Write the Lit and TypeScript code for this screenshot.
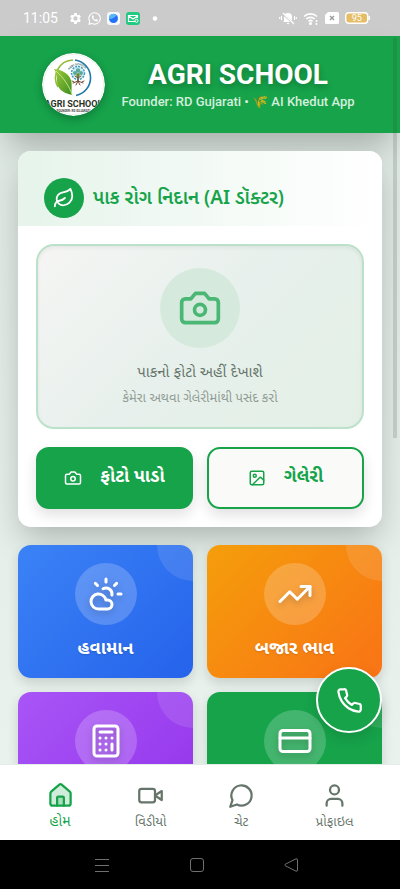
import { LitElement, html, css, svg } from "lit";
import { customElement } from "lit/decorators.js";

const cameraShape = svg`<path d="M14.5 4h-5L7 7H4a2 2 0 0 0-2 2v9a2 2 0 0 0 2 2h16a2 2 0 0 0 2-2V9a2 2 0 0 0-2-2h-3l-2.500-3z"/><circle cx="12" cy="13" r="3"/>`;

const shapes = {
  camera: cameraShape,
  leaf: svg`<path d="M11 20A7 7 0 0 1 9.800 6.100C15.500 5 17 4.480 19 2c1 2 2 4.180 2 8 0 5.500-4.780 10-10 10Z"/><path d="M2 21c0-3 1.850-5.360 5.080-6C9.500 14.520 12 13 13 12"/>`,
  image: svg`<rect x="3" y="3" width="18" height="18" rx="2"/><circle cx="9" cy="9" r="2"/><path d="m21 15-3.086-3.086a2 2 0 0 0-2.828 0L6 21"/>`,
  weather: svg`<path d="M12 2v2M4.930 4.930l1.410 1.410M20 12h2M19.070 4.930l-1.410 1.410M15.947 12.650a4 4 0 0 0-5.925-4.128"/><path d="M13 22H7a5 5 0 1 1 4.900-6H13a3 3 0 0 1 0 6Z"/>`,
  trend: svg`<path d="M22 7 13.500 15.500 8.500 10.500 2 17"/><path d="M16 7h6v6"/>`,
  calculator: svg`<rect x="4" y="2" width="16" height="20" rx="2"/><path d="M8 6h8M16 14v4M16 10h.01M12 10h.01M8 10h.01M12 14h.01M8 14h.01M12 18h.01M8 18h.01"/>`,
  card: svg`<rect x="2" y="5" width="20" height="14" rx="2"/><path d="M2 10h20"/>`,
  phone: svg`<path d="M22 16.920v3a2 2 0 0 1-2.180 2 19.790 19.790 0 0 1-8.630-3.070 19.500 19.500 0 0 1-6-6 19.790 19.790 0 0 1-3.070-8.670A2 2 0 0 1 4.110 2h3a2 2 0 0 1 2 1.720 12.840 12.840 0 0 0 .7 2.810 2 2 0 0 1-.45 2.110L8.090 9.910a16 16 0 0 0 6 6l1.270-1.270a2 2 0 0 1 2.110-.45 12.840 12.840 0 0 0 2.810.7A2 2 0 0 1 22 16.920z"/>`,
  home: svg`<path fill="#16a34a" fill-opacity=".2" d="M3 10a2 2 0 0 1 .709-1.528l7-5.999a2 2 0 0 1 2.582 0l7 5.999A2 2 0 0 1 21 10v9a2 2 0 0 1-2 2H5a2 2 0 0 1-2-2z"/><path fill="#16a34a" fill-opacity=".2" d="M15 21v-7a1 1 0 0 0-1-1h-4a1 1 0 0 0-1 1v7"/>`,
  video: svg`<path d="m22 8-6 4 6 4V8Z"/><rect x="2" y="6" width="14" height="12" rx="2"/>`,
  chat: svg`<path d="M7.900 20A9 9 0 1 0 4 16.100L2 22Z"/>`,
  user: svg`<circle cx="12" cy="7" r="4"/><path d="M19 21v-2a4 4 0 0 0-4-4H9a4 4 0 0 0-4 4v2"/>`,
};

const icon = (name: keyof typeof shapes, cls = "") =>
  html`<svg class="icon ${cls}" viewBox="0 0 24 24" aria-hidden="true">${shapes[name]}</svg>`;

const tiles = [
  { label: "હવામાન", name: "Weather", icon: "weather", tone: "blue" },
  { label: "બજાર ભાવ", name: "Market prices", icon: "trend", tone: "orange" },
  { label: "", name: "Calculator", icon: "calculator", tone: "purple" },
  { label: "", name: "Card", icon: "card", tone: "green" },
] as const;

const tabs = [
  { label: "હોમ", icon: "home", active: true },
  { label: "વિડીયો", icon: "video", active: false },
  { label: "ચેટ", icon: "chat", active: false },
  { label: "પ્રોફાઇલ", icon: "user", active: false },
] as const;

@customElement("app-root")
export class AppRoot extends LitElement {
  static styles = css`
    :host {
      --green: #16a34a;
      --gujarati: "Noto Sans Gujarati", "Noto Sans", sans-serif;
      display: flex;
      flex-direction: column;
      height: 100vh;
      overflow: hidden;
      position: relative;
      background: #e5efe9;
      font-family: Roboto, "Noto Sans Gujarati", "Noto Sans", sans-serif;
    }
    * { box-sizing: border-box; }
    svg { display: block; flex: none; }
    button { font: inherit; border: 0; margin: 0; padding: 0; cursor: pointer; }
    .icon { width: 24px; height: 24px; fill: none; stroke: currentColor; stroke-width: 2; stroke-linecap: round; stroke-linejoin: round; }

    .status { flex: none; height: 36px; padding: 0 30px 0 23px; display: flex; align-items: center; justify-content: space-between; background: #cbcbcb; color: #fff; font-size: 14px; }
    .group { display: flex; align-items: center; gap: 6px; }
    .clock { margin-right: 5px; }

    .header { flex: none; display: flex; align-items: center; justify-content: center; gap: 13px; padding: 17px 18px; background: var(--green); color: #fff; box-shadow: 0 18px 32px -8px rgba(0, 0, 0, .28); z-index: 1; }
    .logo { width: 63px; height: 63px; border-radius: 50%; box-shadow: 0 3px 8px rgba(0, 0, 0, .25); }
    .brand { text-align: center; min-width: 240px; }
    .title { margin: 0; font-size: 28px; line-height: 34px; font-weight: 700; text-shadow: 0 3px 6px rgba(0, 0, 0, .25); }
    .subtitle { margin: 0; font-size: 13px; line-height: 20px; font-weight: 500; color: #d4eedd; }

    .content { flex: 1; min-height: 0; overflow: hidden; padding: 18px; display: flex; flex-direction: column; gap: 18px; background: linear-gradient(#dfe9e3, #e9f2ed); }
    .doctor { flex: none; position: relative; z-index: 2; background: #fff; border-radius: 13px; box-shadow: 0 14px 32px -4px rgba(0, 0, 0, .25); }
    .doctor-head { display: flex; align-items: center; gap: 9px; padding: 27px 26px 8px; border-radius: 13px 13px 0 0; background: linear-gradient(90deg, #e6f4eb, #fff); color: var(--green); }
    .badge { display: grid; place-items: center; width: 40px; height: 40px; border-radius: 50%; background: var(--green); color: #fff; }
    .doctor-title { margin: 0; padding-top: 4px; font: 600 19px/30px "Noto Sans Gujarati", "Noto Sans", sans-serif; }
    .s18 { width: 18px; height: 18px; }
    .s22 { width: 22px; height: 22px; }
    .s27 { width: 27px; height: 27px; }
    .s36 { width: 36px; height: 36px; filter: drop-shadow(0 3px 3px rgba(0, 0, 0, .2)); }
    .s44 { width: 44px; height: 44px; color: #4bb774; }
    .doctor-body { padding: 18px; display: flex; flex-direction: column; gap: 18px; }
    .preview { display: flex; flex-direction: column; align-items: center; border: 2px solid #bce1ca; border-radius: 18px; padding: 22px 16px 16px; background: linear-gradient(135deg, #f5f5f4, #e7f0ec 50%, #e4f0e6); box-shadow: inset 0 2px 4px rgba(0, 0, 0, .06); font-family: var(--gujarati); text-align: center; }
    .disc { display: grid; place-items: center; width: 80px; height: 80px; border-radius: 50%; background: #d5e9dd; margin-bottom: 13px; }
    .hint { margin: 0; font-size: 15px; line-height: 26px; color: #66756a; }
    .subhint { margin: 0; font-size: 13px; line-height: 24px; color: #909c94; }
    .actions { display: grid; grid-template-columns: 1fr 1fr; gap: 14px; }
    .action { height: 62px; display: flex; align-items: center; justify-content: center; gap: 18px; border-radius: 13px; border: 2px solid var(--green); font: 700 18px/24px "Noto Sans Gujarati", "Noto Sans", sans-serif; box-shadow: 0 6px 14px rgba(0, 0, 0, .12); }
    .primary { background: var(--green); color: #fff; }
    .secondary { background: #fafbf9; color: var(--green); }

    .tiles { flex: none; display: grid; grid-template-columns: 1fr 1fr; gap: 14px; }
    .tile-wrap { display: grid; border-radius: 13px; box-shadow: 0 5px 12px rgba(0, 0, 0, .14); position: relative; z-index: 2; }
    .tile { position: relative; overflow: hidden; height: 133px; padding: 18px 8px 14px; display: flex; flex-direction: column; align-items: center; justify-content: space-between; border-radius: 13px; color: #fff; font: 700 18px/28px "Noto Sans Gujarati", "Noto Sans", sans-serif; text-shadow: 0 1px 2px rgba(0, 0, 0, .15); }
    .tile::after { content: ""; position: absolute; top: -36px; right: -36px; width: 72px; height: 72px; border-radius: 50%; background: rgba(255, 255, 255, .11); }
    .blue { background: linear-gradient(135deg, #3b82f6, #2563eb); }
    .orange { background: linear-gradient(135deg, #f59e0b, #f97316); }
    .purple { background: linear-gradient(135deg, #a855f7, #9333ea); }
    .green { background: var(--green); }
    .tile-disc { display: grid; place-items: center; width: 62px; height: 62px; border-radius: 50%; background: rgba(255, 255, 255, .2); }

    .tabs { flex: none; z-index: 3; height: 76px; padding: 0 16px; display: flex; justify-content: space-around; align-items: center; background: #fff; border-top: 1px solid #e3ece6; }
    .tab { display: flex; flex-direction: column; align-items: center; gap: 2px; padding-top: 12px; color: #66756a; text-decoration: none; font: 400 13px/24px "Noto Sans Gujarati", "Noto Sans", sans-serif; }
    .active { color: var(--green); font-size: 14px; }

    .system { flex: none; z-index: 3; height: 49px; padding-right: 8px; display: flex; justify-content: center; gap: 80px; align-items: center; background: #000; color: #707070; }
    .system button { background: none; color: inherit; }
    .system svg { fill: none; stroke: currentColor; stroke-width: 1; stroke-linejoin: round; }
    .call { position: absolute; right: 18px; bottom: 156px; width: 66px; height: 66px; display: grid; place-items: center; z-index: 4; border-radius: 50%; border: 2px solid #fff; background: var(--green); color: #fff; box-shadow: 0 5px 14px rgba(0, 0, 0, .12); }
    .call .icon { width: 27px; height: 27px; }
    .scrollbar { position: absolute; top: 38px; right: 3px; width: 4px; height: 45%; background: rgba(60, 75, 65, .18); z-index: 5; }
  `;

  private logo() {
    return html`<svg class="logo" viewBox="0 0 63 63" role="img" aria-label="Agri School">
      <defs>
        <clipPath id="round"><circle cx="31.500" cy="31.500" r="31.500" /></clipPath>
        <linearGradient id="leaf" x1="0" y1="0" x2="1" y2="1"><stop offset="0" stop-color="#a2cc39" /><stop offset="1" stop-color="#3c8d20" /></linearGradient>
      </defs>
      <g clip-path="url(#round)">
        <rect width="63" height="63" fill="#fff" />
        <circle cx="31.500" cy="31.500" r="30" fill="none" stroke="#edf1ee" />
        <path d="M31 7A18 18 0 0 0 16 34" fill="none" stroke="#94bb3a" stroke-width="1.600" />
        <path d="M33 7A18 18 0 0 1 34 42.500" fill="none" stroke="#2478a8" stroke-width="1.600" />
        <path id="arc" d="M27 17Q36 7 46 18" fill="none" />
        <text font-family="Roboto" font-size="3" font-weight="700" fill="#3c6d73"><textPath href="#arc">AGRI SCHOOL</textPath></text>
        <circle cx="36" cy="20" r="6.500" fill="#d7eff4" stroke="#3d9dbb" stroke-width="1.500" stroke-dasharray="2 1" />
        <g fill="#5aa7a0"><circle cx="33" cy="20" r="2" /><circle cx="36" cy="17.500" r="2.200" /><circle cx="39" cy="20" r="2" /><circle cx="36" cy="22" r="2" fill="#79b64a" /></g>
        <path d="M36 21v7M36 25l-3-2M36 25l3-2M36 28l-5 2M36 28l-2 4M36 28l2 4M36 28l5 2M32 29l-2-1M40 29l2-1" fill="none" stroke="#70482f" stroke-width="1" stroke-linecap="round" />
        <path d="M12 16C21 17 28 21 29.500 29C30 35 29 39 30 42C20 40 15 35 15 28C15 22 14 19 12 16Z" fill="url(#leaf)" />
        <path d="M14 18C22 25 27 33 30.500 42.500" fill="none" stroke="#dcedaa" stroke-width=".8" />
        <text x="31.500" y="53.500" text-anchor="middle" font-family="Roboto" font-size="9" font-weight="700" fill="#29331f">AGRI SCHOOL</text>
        <text x="31.500" y="58.500" text-anchor="middle" font-family="Roboto" font-size="3" font-weight="700" fill="#444">FOUNDER: RD GUJARATI</text>
      </g>
    </svg>`;
  }

  private statusBar() {
    return html`<div class="status">
      <div class="group">
        <span class="clock">11:05</span>
        <svg width="13" height="13" viewBox="0 0 24 24" fill="#fff"><path fill-rule="evenodd" d="m19.400 13 .1-1-.1-1 2.500-2-2.400-4.100-3 1.200-1.700-1L14.400 2h-4.800l-.4 3.100-1.700 1-3-1.200L2.100 9l2.500 2-.1 1 .1 1-2.500 2 2.400 4.100 3-1.200 1.700 1 .4 3.100h4.800l.4-3.100 1.700-1 3 1.200 2.400-4.100zM12 16a4 4 0 1 1 0-8 4 4 0 0 1 0 8z" /></svg>
        <svg width="13" height="13" viewBox="0 0 24 24" fill="none" stroke="#fff" stroke-width="2"><path d="M3 17a10.500 10.500 0 1 1 4 4l-5 1.500z" /><path fill="#fff" stroke="none" d="M8 6.500c-3 2 1 10 7 11 3 .2 4-2 3-3l-3-1.500-1.500 1.500c-2-1-3-2-4-4L11 9 9.500 6z" /></svg>
        <svg width="13" height="13" viewBox="0 0 13 13"><rect width="13" height="13" rx="3" fill="#f5f8fc" /><circle cx="6.500" cy="6.500" r="4.500" fill="#2472f5" /><path d="M2 7Q7 7 9.500 3A4.500 4.500 0 0 0 2 7z" fill="#5bb5fb" /></svg>
        <svg width="14" height="13" viewBox="0 0 14 13"><rect width="14" height="13" rx="3" fill="#23c881" /><path d="M10 9.500H2.500v-6h9V6M2.500 4 7 7l4.500-3" fill="none" stroke="#fff" stroke-width="1.200" /><circle cx="10.500" cy="8.800" r="1.500" fill="#23c881" stroke="#fff" /></svg>
        <svg width="18" height="5" viewBox="0 0 18 5"><circle cx="9" cy="2.500" r="2.300" fill="#fff" /></svg>
      </div>
      <div class="group">
        <svg width="18" height="14" viewBox="0 0 18 14"><path d="M5 10V6a4 4 0 0 1 8 0v4l1 1H4zM7.500 12h3l-1.500 1.500z" fill="#fff" /><path d="M3 2l12 11" stroke="#cbcbcb" stroke-width="2.200" /><path d="M4 2l11 11M2.500 5v4M.7 6v2M15.500 5v4M17.300 6v2" stroke="#fff" fill="none" stroke-width="1.100" /></svg>
        <svg width="16" height="13" viewBox="0 0 16 13" fill="none" stroke="#fff" stroke-width="1.700"><path d="M1 4.500a9.500 9.500 0 0 1 13 0M3.300 7a6 6 0 0 1 8.400 0M5.500 9.300a3 3 0 0 1 4 0" /><circle cx="7.500" cy="11.500" r=".7" fill="#fff" /><path d="M13.500 8v2M13.500 11v2" stroke-width="1.500" /></svg>
        <svg width="14" height="12" viewBox="0 0 14 12"><path d="M3 0h9.500Q14 0 14 1.500v9Q14 12 12.500 12h-11Q0 12 0 10.500V3z" fill="#fff" /><path d="m5 4 4 4m0-4L5 8" stroke="#999" stroke-width="1.300" /></svg>
        <svg width="25" height="12" viewBox="0 0 25 12"><rect x=".7" y=".7" width="22" height="10.600" rx="3" fill="#e4bd65" stroke="#fff" stroke-width="1.400" /><path d="M24.200 4v4" stroke="#fff" stroke-width="1.500" /><text x="11.700" y="9.200" text-anchor="middle" font-family="Roboto" font-size="9" fill="#fff">95</text></svg>
      </div>
    </div>`;
  }

  render() {
    return html`
      ${this.statusBar()}
      <header class="header">
        ${this.logo()}
        <div class="brand">
          <h1 class="title">AGRI SCHOOL</h1>
          <p class="subtitle">Founder: RD Gujarati • 🌾 AI Khedut App</p>
        </div>
      </header>
      <main class="content">
        <section class="doctor">
          <div class="doctor-head">
            <span class="badge">${icon("leaf", "s22")}</span>
            <h2 class="doctor-title">પાક રોગ નિદાન (AI ડૉક્ટર)</h2>
          </div>
          <div class="doctor-body">
            <div class="preview">
              <span class="disc">${icon("camera", "s44")}</span>
              <p class="hint">પાકનો ફોટો અહીં દેખાશે</p>
              <p class="subhint">કેમેરા અથવા ગેલેરીમાંથી પસંદ કરો</p>
            </div>
            <div class="actions">
              <button class="action primary">${icon("camera", "s18")}ફોટો પાડો</button>
              <button class="action secondary">${icon("image", "s18")}ગેલેરી</button>
            </div>
          </div>
        </section>
        <div class="tiles">
          ${tiles.map((t) => html`<div class="tile-wrap"><button class="tile ${t.tone}" aria-label=${t.label || t.name}><span class="tile-disc">${icon(t.icon, "s36")}</span><span>${t.label}</span></button></div>`)}
        </div>
      </main>
      <button class="call" aria-label="Call">${icon("phone")}</button>
      <nav class="tabs">
        ${tabs.map((t) => html`<a href="#" class="tab ${t.active ? "active" : ""}">${icon(t.icon, "s27")}${t.label}</a>`)}
      </nav>
      <div class="system">
        <button aria-label="Recent apps"><svg width="16" height="16"><path d="M1 2.500h14M1 8.500h14M1 14.500h14" /></svg></button>
        <button aria-label="Home"><svg width="14" height="14"><rect x=".5" y=".5" width="13" height="13" rx="2.500" /></svg></button>
        <button aria-label="Back"><svg width="14" height="14"><path d="M12 .8Q13.500.5 13.500 2v10q0 1.500-1.500 1.200L1.200 7.700q-1-.7 0-1.400z" /></svg></button>
      </div>
      <div class="scrollbar"></div>
    `;
  }
}
